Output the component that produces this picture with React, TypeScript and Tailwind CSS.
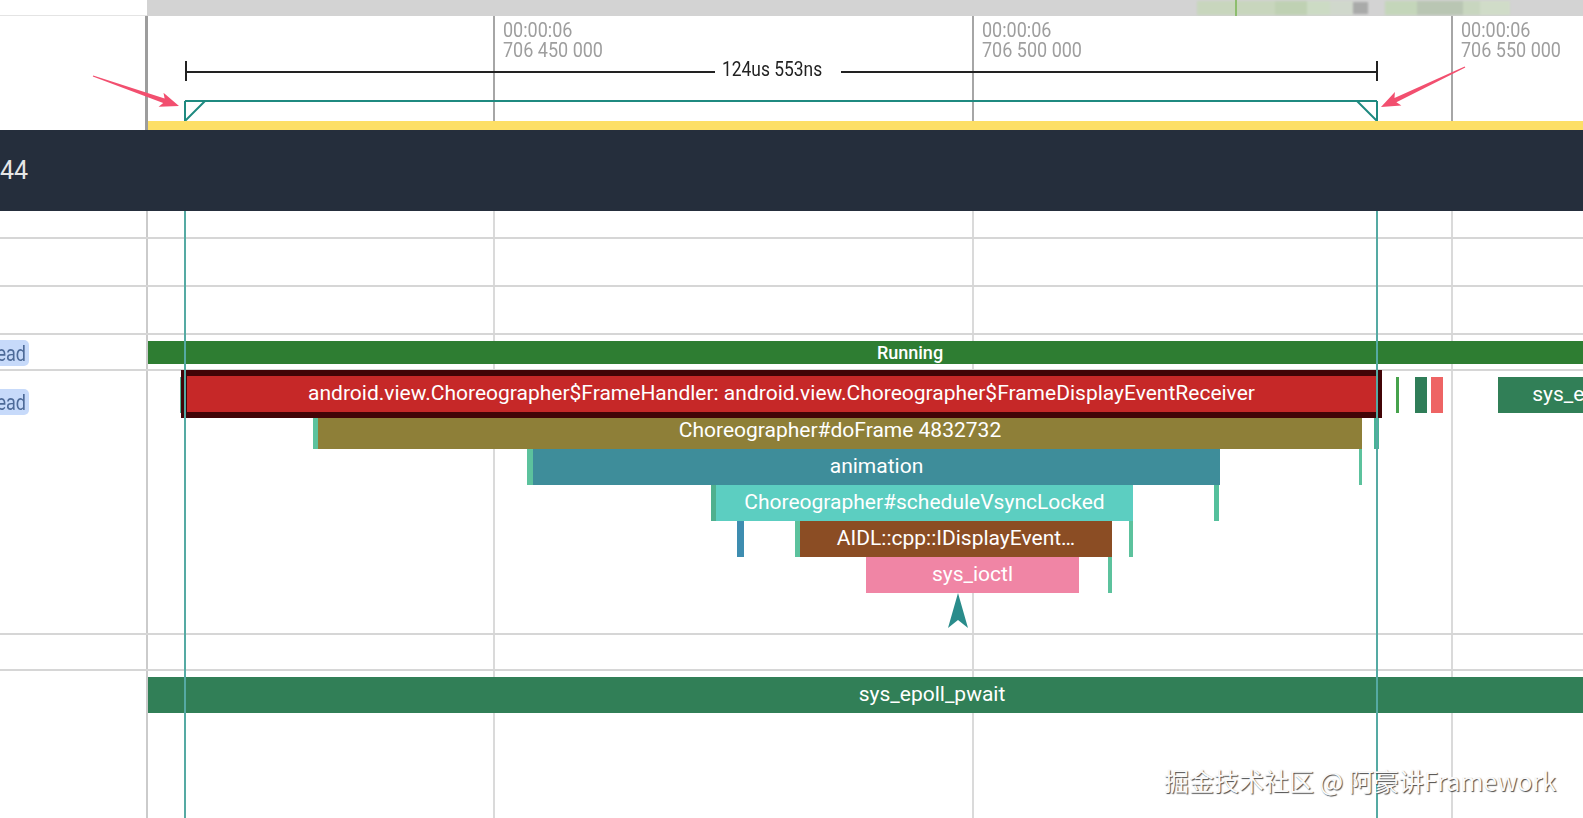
import React from "react";

type Slice = {
  x: number;
  w: number;
  d: number;
  bg: string;
  label?: string;
};

// Slices of the selected thread, x in page pixels, d = nesting depth.
const SLICES: Slice[] = [
  { x: 180, w: 3, d: 0, bg: "bg-[#4fb89a]" },
  { x: 1396, w: 3, d: 0, bg: "bg-[#46a24c]" },
  { x: 1415, w: 12, d: 0, bg: "bg-[#2f7d58]" },
  { x: 1431, w: 12, d: 0, bg: "bg-[#ee6464]" },
  { x: 1498, w: 215, d: 0, bg: "bg-[#317f57]", label: "sys_epoll_pwait" },

  { x: 313, w: 5, d: 1, bg: "bg-[#5cc29d]" },
  { x: 318, w: 1044, d: 1, bg: "bg-[#8e7f38]", label: "Choreographer#doFrame 4832732" },
  { x: 1374, w: 5, d: 1, bg: "bg-[#48b496]" },

  { x: 527, w: 6, d: 2, bg: "bg-[#5cc29d]" },
  { x: 533, w: 687, d: 2, bg: "bg-[#3e8d9a]", label: "animation" },
  { x: 1359, w: 3, d: 2, bg: "bg-[#5cc29d]" },

  { x: 711, w: 5, d: 3, bg: "bg-[#4fb08e]" },
  { x: 716, w: 417, d: 3, bg: "bg-[#5ccec1]", label: "Choreographer#scheduleVsyncLocked" },
  { x: 1214, w: 5, d: 3, bg: "bg-[#55c09c]" },

  { x: 737, w: 7, d: 4, bg: "bg-[#3e8db0]" },
  { x: 795, w: 5, d: 4, bg: "bg-[#5cc29d]" },
  { x: 800, w: 312, d: 4, bg: "bg-[#8b4d24]", label: "AIDL::cpp::IDisplayEvent…" },
  { x: 1129, w: 4, d: 4, bg: "bg-[#5cc29d]" },

  { x: 866, w: 213, d: 5, bg: "bg-[#f085a5]", label: "sys_ioctl" },
  { x: 1108, w: 4, d: 5, bg: "bg-[#5cc29d]" },
];

const DEPTH_TOP = 6;
const DEPTH_H = 36;

// Blurry overview blocks in the top strip (x relative to the strip).
const OVERVIEW: { x: number; w: number; bg: string }[] = [
  { x: 1050, w: 78, bg: "bg-[#c8d6bd]" },
  { x: 1128, w: 32, bg: "bg-[#bfd1b3]" },
  { x: 1160, w: 23, bg: "bg-[#ccdbc4]" },
  { x: 1183, w: 23, bg: "bg-[#d0d8cc]" },
  { x: 1238, w: 32, bg: "bg-[#c4d6ba]" },
  { x: 1270, w: 46, bg: "bg-[#b9c6b3]" },
  { x: 1316, w: 17, bg: "bg-[#c8d6bf]" },
  { x: 1333, w: 30, bg: "bg-[#d0dcc8]" },
];

const TIME_MARKS = [
  { x: 493, ns: "706 450 000" },
  { x: 972, ns: "706 500 000" },
  { x: 1451, ns: "706 550 000" },
];

function arrowPoints(x1: number, y1: number, x2: number, y2: number) {
  const tailW = 1.2;
  const shaftW = 4.5;
  const headW = 15;
  const headL = 19;
  const dx = x2 - x1;
  const dy = y2 - y1;
  const len = Math.hypot(dx, dy);
  const ux = dx / len;
  const uy = dy / len;
  const nx = -uy;
  const ny = ux;
  const bx = x2 - ux * headL;
  const by = y2 - uy * headL;
  const p = (x: number, y: number, k: number) => `${(x + nx * k).toFixed(1)},${(y + ny * k).toFixed(1)}`;
  return [
    p(x1, y1, tailW / 2),
    p(bx + ux * 3, by + uy * 3, shaftW / 2),
    p(bx, by, headW / 2),
    `${x2},${y2}`,
    p(bx, by, -headW / 2),
    p(bx + ux * 3, by + uy * 3, -shaftW / 2),
    p(x1, y1, -tailW / 2),
  ].join(" ");
}

function TopStrip() {
  return (
    <div className="flex h-[16px] shrink-0">
      <div className="w-[147px] bg-white border-b border-[#e4e4e4]" />
      <div className="relative flex-1 bg-[#d3d3d3] overflow-hidden">
        <div className="absolute inset-0 blur-[1px]">
          {OVERVIEW.map((b, i) => (
            <div key={i} className={`absolute top-[1px] h-[14px] ${b.bg}`} style={{ left: b.x, width: b.w }} />
          ))}
          <div className="absolute top-[2px] h-[12px] left-[1206px] w-[15px] bg-[#a9aaa9]" />
        </div>
        <div className="absolute top-0 h-[16px] left-[1088px] w-[2px] bg-[#8dbd6e]" />
      </div>
    </div>
  );
}

function Ruler() {
  return (
    <div className="relative h-[105px] shrink-0 flex">
      <div className="w-[145px] bg-white" />
      <div className="w-[3px] bg-[#9d9d9d]" />
      <div className="flex-1" />
      {TIME_MARKS.map((m) => (
        <React.Fragment key={m.x}>
          <div className="absolute top-0 bottom-0 w-[2px] bg-[#a6a6a6]" style={{ left: m.x }} />
          <div
            className="absolute top-[4px] origin-left scale-x-[0.9] text-[20px] leading-[20px] text-[#9e9e9e] whitespace-nowrap"
            style={{ left: m.x + 10 }}
          >
            <div>00:00:06</div>
            <div>{m.ns}</div>
          </div>
        </React.Fragment>
      ))}
      <svg className="absolute inset-0" width="1583" height="105" viewBox="0 0 1583 105">
        <g stroke="#222222" strokeWidth="2" fill="none">
          <line x1="186" y1="56" x2="715" y2="56" />
          <line x1="841" y1="56" x2="1377" y2="56" />
          <line x1="186" y1="45" x2="186" y2="65" />
          <line x1="1377" y1="45" x2="1377" y2="65" />
        </g>
        <g stroke="#1f8a80" strokeWidth="2" fill="none">
          <line x1="185" y1="85" x2="1377" y2="85" />
          <polyline points="185,85 185,105 205,85" />
          <polyline points="1377,85 1377,105 1357,85" />
        </g>
      </svg>
      <div className="absolute left-[722px] top-[43px] origin-left scale-x-[0.87] text-[20px] leading-[20px] text-[#222222] whitespace-nowrap">
        124us 553ns
      </div>
    </div>
  );
}

function RowLine() {
  return <div className="h-[2px] shrink-0 bg-[#d6d6d6]" />;
}

function NamePill({ top }: { top: string }) {
  return (
    <div
      className={`absolute left-0 ${top} h-[26px] w-[29px] rounded-r-[5px] bg-[#c7dafa] overflow-hidden flex items-center justify-end pr-[3px]`}
    >
      <span className="inline-block origin-right scale-x-[0.82] text-[22px] text-[#4d6a98] whitespace-nowrap">
        ead
      </span>
    </div>
  );
}

function SliceBox({ s }: { s: Slice }) {
  return (
    <div
      className={`absolute h-[36px] ${s.bg} flex items-center justify-center overflow-hidden text-white text-[21px] whitespace-nowrap`}
      style={{ left: s.x, top: DEPTH_TOP + s.d * DEPTH_H, width: s.w }}
    >
      {s.label}
    </div>
  );
}

function Body() {
  return (
    <div className="relative flex-1">
      {/* vertical grid behind the tracks */}
      <div className="absolute inset-0">
        <div className="absolute top-0 bottom-0 left-[146px] w-[2px] bg-[#cbcbcb]" />
        {TIME_MARKS.map((m) => (
          <div key={m.x} className="absolute top-0 bottom-0 w-[2px] bg-[#dadada]" style={{ left: m.x }} />
        ))}
      </div>

      <div className="relative flex flex-col h-full">
        <div className="h-[26px] shrink-0" />
        <RowLine />
        <div className="h-[46px] shrink-0" />
        <RowLine />
        <div className="h-[46px] shrink-0" />
        <RowLine />

        {/* thread state track */}
        <div className="relative h-[34px] shrink-0">
          <NamePill top="top-[5px]" />
          <div className="absolute left-[148px] top-[6px] h-[23px] w-[1524px] bg-[#2e7d32] flex items-center justify-center text-white text-[18px] font-medium">
            Running
          </div>
        </div>
        <RowLine />

        {/* main thread slices */}
        <div className="relative h-[262px] shrink-0">
          <NamePill top="top-[18px]" />
          {SLICES.map((s, i) => (
            <SliceBox key={i} s={s} />
          ))}
          <div className="absolute left-[181px] top-[-1px] h-[48px] w-[1201px] border-[6px] border-[#420407] bg-[#c62828] flex items-center justify-center overflow-hidden text-white text-[21px] whitespace-nowrap">
            android.view.Choreographer$FrameHandler: android.view.Choreographer$FrameDisplayEventReceiver
          </div>
          <svg className="absolute left-[946px] top-[222px]" width="24" height="36" viewBox="0 0 24 36">
            <polygon points="12,0 22,35 12,27 2,35" fill="#2a8c8b" />
          </svg>
        </div>
        <RowLine />
        <div className="h-[34px] shrink-0" />
        <RowLine />

        {/* idle track */}
        <div className="relative flex-1">
          <div className="absolute left-[148px] top-[6px] h-[36px] w-[1568px] bg-[#317f57] flex items-center justify-center text-white text-[21px]">
            sys_epoll_pwait
          </div>
        </div>
      </div>

      {/* selection bounds */}
      <div className="absolute top-0 bottom-0 left-[184px] w-[2px] bg-[#55aaa3]" />
      <div className="absolute top-0 bottom-0 left-[1376px] w-[2px] bg-[#55aaa3]" />
    </div>
  );
}

export default function App() {
  return (
    <div className="relative w-[1583px] h-[818px] overflow-hidden bg-white font-['Roboto',sans-serif]">
      <div className="flex flex-col h-full">
        <TopStrip />
        <Ruler />
        <div className="flex h-[9px] shrink-0">
          <div className="w-[145px] bg-white" />
          <div className="w-[3px] bg-[#9d9d9d]" />
          <div className="flex-1 bg-[#fddf66]" />
        </div>
        <div className="h-[81px] shrink-0 bg-[#252e3c] flex items-center text-[25px] text-[#e6e6e6]">
          44
        </div>
        <Body />
      </div>

      <svg className="absolute inset-0 pointer-events-none" width="1583" height="818" viewBox="0 0 1583 818">
        <polygon points={arrowPoints(93, 76, 179, 106)} fill="#f24f6f" />
        <polygon points={arrowPoints(1465, 67, 1381, 107)} fill="#f24f6f" />
      </svg>

      <div className="absolute left-[1164px] top-[765px] text-[25px] leading-[30px] whitespace-nowrap text-[#fafafa] font-['Noto_Sans_CJK_SC','Noto_Sans',sans-serif] [text-shadow:1px_1px_1px_#4a4a4a]">
        掘金技术社区 @ 阿豪讲Framework
      </div>
    </div>
  );
}
